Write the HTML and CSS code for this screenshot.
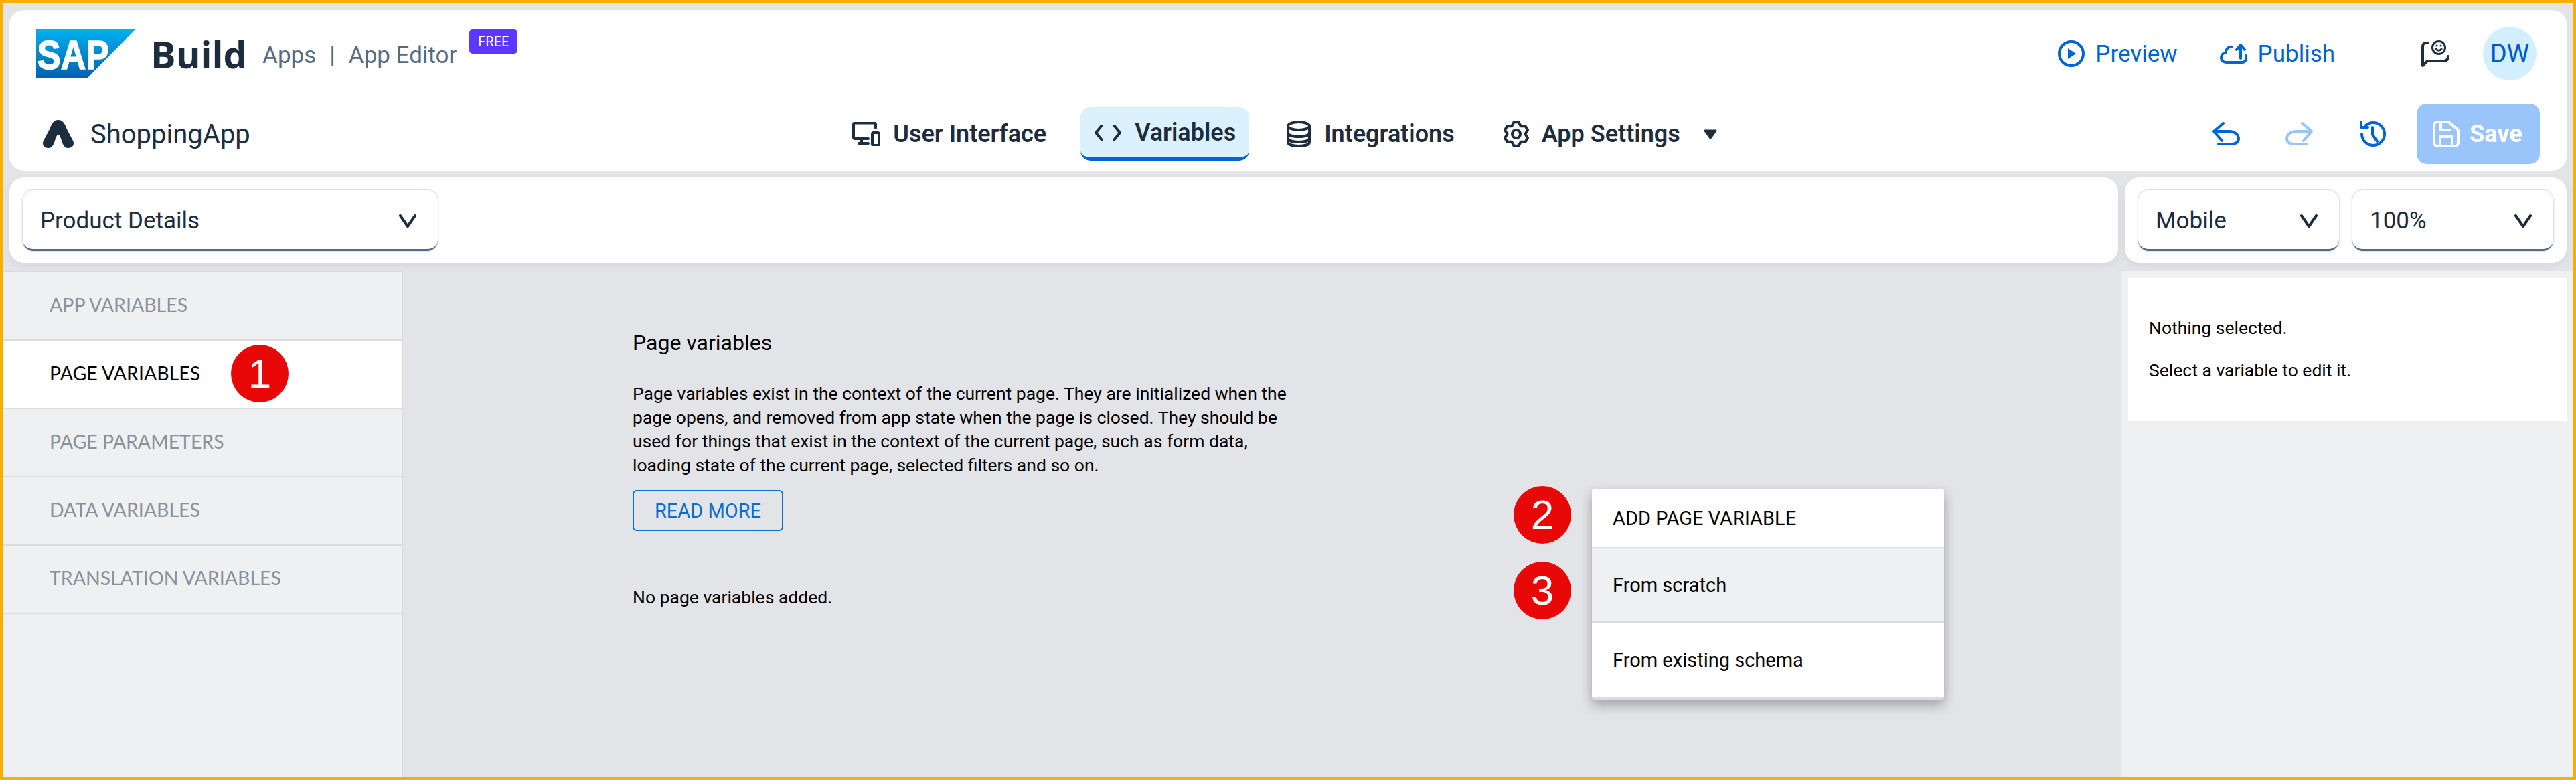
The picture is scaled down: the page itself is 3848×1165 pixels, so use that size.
FILE: index.html
```html
<!DOCTYPE html>
<html lang="en">
<head>
<meta charset="UTF-8" />
<title>SAP Build Apps - App Editor</title>
<link rel="stylesheet" href="styles.css">
</head>
<body>
  <div class="frame">
    <header class="topbar">
      <div class="topbar-row">
        <div class="brand">
          <svg class="sap-logo" width="148" height="73" viewBox="0 0 148 73">
            <defs>
              <linearGradient id="sapBlue" x1="0" y1="0" x2="0" y2="1">
                <stop offset="0" stop-color="#00b1f0" />
                <stop offset="1" stop-color="#0060b0" />
              </linearGradient>
            </defs>
            <polygon points="0,0 148,0 76,73 0,73" fill="url(#sapBlue)" />
            <text class="sap-text" x="2" y="59" textLength="107" lengthAdjust="spacingAndGlyphs">SAP</text>
          </svg>
          <span class="brand-name">Build</span>
          <span class="brand-sub">Apps<span class="brand-sep">|</span>App Editor</span>
          <span class="free-badge">FREE</span>
        </div>
        <div class="top-actions">
          <a class="link-action link-preview">
            <svg width="40" height="40" viewBox="0 0 40 40"><circle class="ico" cx="20" cy="20" r="18" /><path class="ico-fill" d="M15 12 L27 20 L15 28 Z" /></svg>
            Preview
          </a>
          <a class="link-action link-publish">
            <svg width="41" height="30" viewBox="0 0 41 30"><path class="ico" d="M18 5 C12 4 9 9 9 13 C4 14 2 18 2 21 C2 26 6 28 10 28 H33 C37 28 39 25 39 22 V18" /><path class="ico" d="M31 22 V3 M25 9 L31 2 L37 9" /></svg>
            Publish
          </a>
          <svg class="feedback" width="42" height="40" viewBox="0 0 42 40">
            <circle class="ico-dark ico-thin" cx="26" cy="11" r="9.500" />
            <path class="ico-dark" d="M10 4 H7 C4 4 2 6 2 9 V38 L9 31 H33 C38 31 40 28 40 24" />
            <path class="ico-dark ico-thin" d="M22 13 C24 16 28 16 30 13" />
            <circle class="ico-dark-fill" cx="23" cy="8" r="1.500" /><circle class="ico-dark-fill" cx="29" cy="8" r="1.500" />
          </svg>
          <div class="avatar">DW</div>
        </div>
      </div>
      <div class="topbar-row topbar-nav">
        <div class="app-name">
          <svg width="48" height="42" viewBox="0 0 48 42"><path class="app-mark" d="M24 0 C31 0 34 6 37 14 L46 31 C49 37 45 42 39 42 C33 42 31 37 29 31 C28 27 26 22 24 22 C22 22 20 27 19 31 C17 37 15 42 9 42 C3 42 -1 37 2 31 L11 14 C14 6 17 0 24 0 Z" /></svg>
          ShoppingApp
        </div>
        <nav class="main-nav">
          <a class="nav-item">
            <svg width="42" height="36" viewBox="0 0 42 36"><path class="ico-dark" d="M35 9 V3.500 A2 2 0 0 0 33 1.500 H4 A2 2 0 0 0 2 3.500 V23 A2 2 0 0 0 4 25 H24 M14 25 V31 M10 32 H24" /><rect class="ico-dark" x="30" y="16" width="10" height="19" rx="2" /></svg>
            User Interface
          </a>
          <a class="nav-item nav-item-active">
            <svg width="42" height="24" viewBox="0 0 42 24"><path class="ico-dark" d="M12 1 L3 12 L12 23 M30 1 L39 12 L30 23" /></svg>
            Variables
          </a>
          <a class="nav-item nav-item-data">
            <svg width="38" height="40" viewBox="0 0 38 40"><ellipse class="ico-dark" cx="19" cy="8" rx="16" ry="6" /><path class="ico-dark" d="M3 8 V32 C3 36 10 38 19 38 C28 38 35 36 35 32 V8 M3 18 C3 22 10 24 19 24 C28 24 35 22 35 18 M3 26 C3 30 10 32 19 32 C28 32 35 30 35 26" /></svg>
            Integrations
          </a>
          <a class="nav-item nav-item-settings">
            <svg width="38" height="40" viewBox="0 0 38 40"><circle class="ico-dark" cx="19" cy="20" r="6" /><path class="ico-dark" d="M15.600 2.300 H22.400 L25.800 8.300 L32.600 8.200 L36 14.100 L32.500 20 L36 25.900 L32.600 31.800 L25.800 31.700 L22.400 37.700 H15.600 L12.200 31.700 L5.400 31.800 L2 25.900 L5.500 20 L2 14.100 L5.400 8.200 L12.200 8.300 Z" /></svg>
            App Settings
            <svg class="caret" width="20" height="15" viewBox="0 0 20 15"><path class="caret-shape" d="M2 2 H18 L10 13 Z" /></svg>
          </a>
        </nav>
        <div class="edit-actions">
          <svg width="42" height="36" viewBox="0 0 42 36"><path class="ico" d="M17 2 L3 14 L15 28 M3 14 H26 C34 14 40 19 40 25 C40 31 35 33 28 33 H10" /></svg>
          <svg class="redo" width="42" height="36" viewBox="0 0 42 36"><path class="ico-faded" d="M25 2 L39 14 L27 28 M39 14 H16 C8 14 2 19 2 25 C2 31 7 33 14 33 H32" /></svg>
          <svg width="42" height="40" viewBox="0 0 42 40"><path class="ico" d="M10 7 A17 17 0 1 1 4 20 M3 1 V10 H13 M20 10 V21 L27 31" /></svg>
          <button class="save-btn" type="button">
            <svg width="40" height="40" viewBox="0 0 40 40"><path class="ico-white" d="M7 2 H24 L38 14 V33 A5 5 0 0 1 33 38 H7 A5 5 0 0 1 2 33 V7 A5 5 0 0 1 7 2 Z M12 2 V14 H26 M11 38 V24 H29 V38" /></svg>
            Save
          </button>
        </div>
      </div>
    </header>

    <div class="toolbar">
      <div class="tool-card tool-card-grow">
        <div class="select select-page"><span>Product Details</span><svg width="26" height="22" viewBox="0 0 26 22"><path class="ico-dark" d="M2 3 L13 19 L24 3" /></svg></div>
      </div>
      <div class="tool-card">
        <div class="select"><span>Mobile</span><svg width="26" height="22" viewBox="0 0 26 22"><path class="ico-dark" d="M2 3 L13 19 L24 3" /></svg></div>
        <div class="select"><span>100%</span><svg width="26" height="22" viewBox="0 0 26 22"><path class="ico-dark" d="M2 3 L13 19 L24 3" /></svg></div>
      </div>
    </div>

    <div class="workspace">
      <aside class="side-menu">
        <div class="side-item">APP VARIABLES</div>
        <div class="side-item side-item-active">PAGE VARIABLES<span class="step-badge step-one">1</span></div>
        <div class="side-item">PAGE PARAMETERS</div>
        <div class="side-item">DATA VARIABLES</div>
        <div class="side-item">TRANSLATION VARIABLES</div>
      </aside>

      <main class="center-panel">
        <h2 class="panel-title">Page variables</h2>
        <p class="panel-text">Page variables exist in the context of the current page. They are initialized when the<br>page opens, and removed from app state when the page is closed. They should be<br>used for things that exist in the context of the current page, such as form data,<br>loading state of the current page, selected filters and so on.</p>
        <button class="read-more" type="button">READ MORE</button>
        <p class="empty-note">No page variables added.</p>

        <span class="step-badge step-two">2</span>
        <span class="step-badge step-three">3</span>
        <div class="add-menu">
          <div class="add-menu-item add-menu-head">ADD PAGE VARIABLE</div>
          <div class="add-menu-item add-menu-hover">From scratch</div>
          <div class="add-menu-item">From existing schema</div>
        </div>
      </main>

      <aside class="props-panel">
        <div class="props-box">
          <p>Nothing selected.</p>
          <p>Select a variable to edit it.</p>
        </div>
      </aside>
    </div>
  </div>
</body>
</html>
```

FILE: styles.css
```css
/* Reset and base */
*, *::before, *::after {
  box-sizing: border-box;
}
html, body {
  margin: 0;
  height: 100%;
}
body {
  font-family: Roboto, "Liberation Sans", sans-serif;
  color: #000;
  overflow: hidden;
}
p, h2 {
  margin: 0;
}
.frame {
  height: 1165px;
  border: 4px solid #f5b000;
  background: #e3e4e8;
  display: flex;
  flex-direction: column;
  padding-top: 11px;
}

/* Icon strokes */
svg {
  display: block;
  flex: none;
}
.ico, .ico-dark, .ico-faded, .ico-white {
  fill: none;
  stroke-width: 4;
  stroke-linecap: round;
  stroke-linejoin: round;
}
.ico { stroke: #0064d9; }
.ico-dark { stroke: #1d2d3e; }
.ico-faded { stroke: #99c5f5; }
.ico-white { stroke: #fff; }
.ico-thin { stroke-width: 3; }
.ico-fill { fill: #0064d9; }
.ico-dark-fill { fill: #1d2d3e; }

/* Top bar */
.topbar {
  margin: 0 10px;
  height: 240px;
  padding: 25px 40px 10px;
  background: #fff;
  border-radius: 22px;
}
.topbar-row {
  display: flex;
  justify-content: space-between;
  align-items: center;
  height: 80px;
}
.topbar-nav {
  display: grid;
  grid-template-columns: 1fr auto 1fr;
  height: 90px;
  margin-top: 35px;
}
.brand {
  display: flex;
  align-items: center;
}
.sap-text {
  font-family: "Liberation Sans", sans-serif;
  font-weight: 700;
  font-size: 61px;
  fill: #fff;
  stroke: #fff;
  stroke-width: 1.5px;
}
.brand-name {
  margin-left: 23px;
  font-family: "Open Sans", sans-serif;
  font-size: 56px;
  font-weight: 700;
  color: #1d2d3e;
}
.brand-sub {
  margin-left: 23px;
  margin-top: 4px;
  font-size: 35px;
  color: #556b82;
}
.brand-sep {
  margin: 0 20px;
}
.free-badge {
  align-self: flex-start;
  margin: 2px 0 0 19px;
  width: 72px;
  height: 36px;
  border-radius: 5px;
  background: #5d36ff;
  color: #fff;
  font-size: 20px;
  line-height: 36px;
  text-align: center;
}
.top-actions {
  display: flex;
  align-items: center;
  padding-right: 5px;
}
.link-action {
  display: flex;
  align-items: center;
  gap: 16px;
  font-size: 35px;
  color: #0064d9;
}
.link-publish {
  margin-left: 63px;
}
.feedback {
  margin-left: 129px;
}
.avatar {
  margin-left: 50px;
  width: 80px;
  height: 80px;
  border-radius: 50%;
  background: #d1efff;
  color: #0057d2;
  font-size: 38px;
  line-height: 80px;
  text-align: center;
}
.app-name {
  display: flex;
  align-items: center;
  gap: 24px;
  padding-left: 9px;
  font-size: 40px;
  color: #1d2d3e;
}
.app-mark {
  fill: #1d2d3e;
}
.main-nav {
  display: flex;
  align-items: center;
  gap: 31px;
  margin-right: 10px;
}
.nav-item {
  display: flex;
  align-items: center;
  gap: 19px;
  height: 80px;
  padding: 0 20px;
  font-size: 36px;
  font-weight: 600;
  color: #1d2d3e;
}
.nav-item-active {
  background: #dcf1fe;
  border-radius: 15px;
  border-bottom: 5px solid #0064d9;
}
.nav-item-data {
  margin-left: 4px;
}
.nav-item-settings {
  margin-left: 2px;
}
.caret {
  margin-left: 16px;
}
.caret-shape {
  fill: #1d2d3e;
  stroke: #1d2d3e;
  stroke-width: 3;
  stroke-linejoin: round;
}
.edit-actions {
  display: flex;
  align-items: center;
  justify-content: flex-end;
}
.redo {
  margin: 0 68px;
}
.save-btn {
  display: flex;
  align-items: center;
  gap: 15px;
  margin-left: 44px;
  width: 184px;
  height: 90px;
  padding: 0 24px;
  border: none;
  border-radius: 15px;
  background: #99c5fa;
  color: #fff;
  font-family: inherit;
  font-size: 36px;
  font-weight: 700;
}

/* Page and device selects */
.toolbar {
  display: flex;
  gap: 10px;
  margin: 10px 10px 0;
}
.tool-card {
  display: flex;
  gap: 20px;
  height: 128px;
  padding: 19px 20px;
  background: #fff;
  border-radius: 22px;
  box-shadow: 0 4px 12px rgba(0, 0, 0, 0.06);
}
.tool-card-grow {
  flex: 1;
}
.select {
  display: flex;
  align-items: center;
  justify-content: space-between;
  width: 300px;
  height: 91px;
  padding: 3px 32px 0 26px;
  background: #fff;
  border-radius: 16px;
  border-bottom: 3px solid #556b82;
  box-shadow: 0 0 3px rgba(85, 107, 130, 0.55);
  font-size: 35px;
  color: #1d2d3e;
}
.select-page {
  width: 620px;
}

/* Workspace */
.workspace {
  flex: 1;
  display: grid;
  grid-template-columns: 598px 1fr 675px;
  margin-top: 12px;
  min-height: 0;
}
.side-menu {
  background: #eff0f2;
  border-top: 2px solid #d9dbe0;
  border-right: 2px solid #d9dbe0;
}
.side-item {
  position: relative;
  height: 102px;
  padding: 0 0 4px 70px;
  display: flex;
  align-items: center;
  border-bottom: 2px solid #d9dbe0;
  font-family: Lato, sans-serif;
  font-size: 28.500px;
  color: #89919a;
}
.side-item-active {
  background: #fff;
  color: #000;
}
.step-badge {
  position: absolute;
  width: 86px;
  height: 86px;
  border-radius: 50%;
  background: #e80808;
  color: #fff;
  font-family: "Liberation Sans", sans-serif;
  font-size: 62px;
  line-height: 86px;
  text-align: center;
}
.step-one {
  left: 341px;
  top: 6px;
}
.step-two {
  left: 1659px;
  top: 321px;
}
.step-three {
  left: 1659px;
  top: 434px;
}
.center-panel {
  position: relative;
  padding: 90px 0 0 343px;
}
.panel-title {
  font-size: 32px;
  font-weight: 400;
  line-height: 34px;
}
.panel-text {
  margin-top: 41px;
  font-size: 26.500px;
  line-height: 35.500px;
}
.read-more {
  display: block;
  margin-top: 20px;
  width: 225px;
  height: 61px;
  padding: 0;
  border: 2px solid #0a6ed1;
  border-radius: 6px;
  background: transparent;
  color: #0a6ed1;
  font-family: inherit;
  font-size: 29px;
}
.empty-note {
  margin-top: 81px;
  font-size: 26.500px;
  line-height: 35px;
}
.add-menu {
  position: absolute;
  left: 1776px;
  top: 325px;
  width: 526px;
  background: #fff;
  border-bottom: 4px solid #d9dbe0;
  border-radius: 4px;
  box-shadow: 0 8px 18px rgba(0, 0, 0, 0.3);
}
.add-menu-item {
  height: 111px;
  padding: 0 31px;
  display: flex;
  align-items: center;
  font-size: 29px;
  color: #000;
}
.add-menu-head {
  height: 89px;
  border-bottom: 2px solid #d9dbe0;
}
.add-menu-hover {
  background: #eef0f2;
  border-bottom: 2px solid #d9dbe0;
}
.props-panel {
  background: #eff0f2;
  padding: 10px;
}
.props-box {
  height: 214px;
  padding: 58px 31px 0;
  background: #fff;
  font-size: 26.500px;
  line-height: 34px;
}
.props-box p + p {
  margin-top: 29px;
}
```
